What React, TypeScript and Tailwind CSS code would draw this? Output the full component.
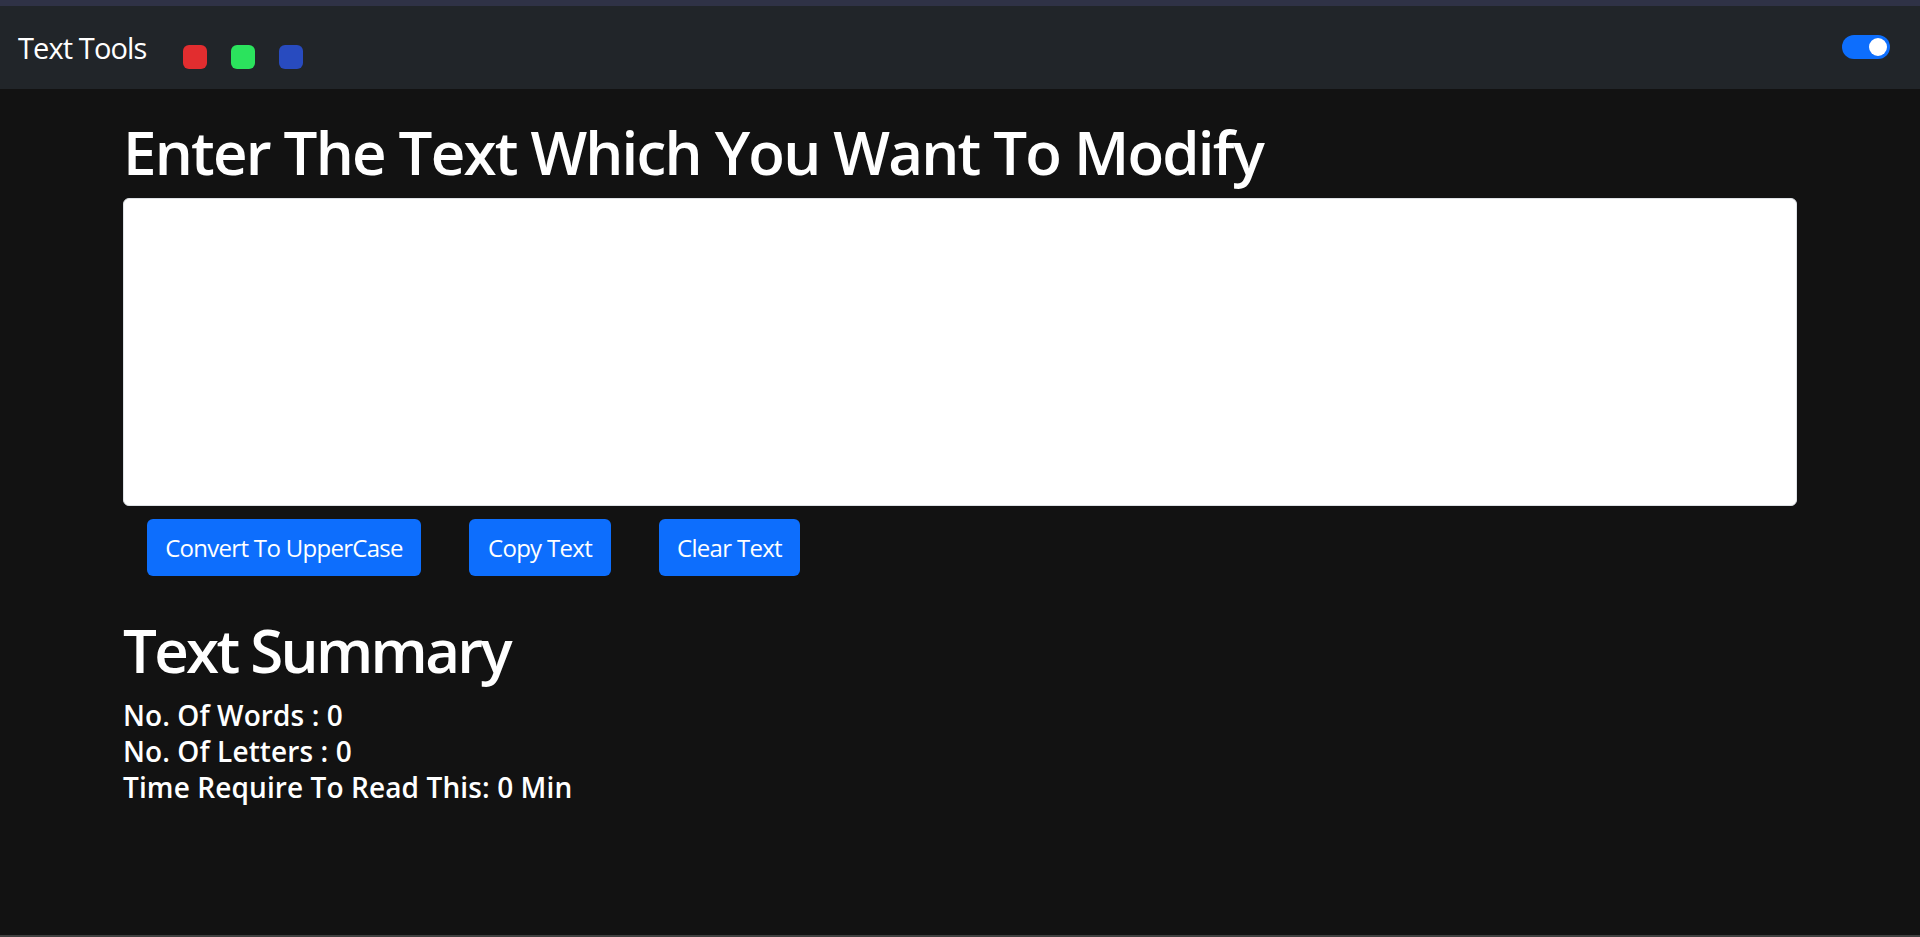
import { useState } from "react";

const swatches = ["bg-[#e22d2f]", "bg-[#2be35d]", "bg-[#284bbf]"];

const Navbar = () => {
  return (
    <nav className="h-[83px] bg-[#212529] flex items-center pl-[18px] pr-[30px]">
      <a className="text-[29px] leading-[40px] text-white tracking-[-0.9px] mt-[1px]">Text Tools</a>
      <div className="flex gap-[24px] ml-[37px] mt-[19px]">
        {swatches.map((c) => (
          <div key={c} className={`w-[24px] h-[24px] rounded-[6px] ${c}`} />
        ))}
      </div>
      <div className="ml-auto -mt-[2px] w-[48px] h-[24px] rounded-full bg-[#0d6efd] flex items-center justify-end pr-[3px]">
        <div className="w-[18px] h-[18px] rounded-full bg-white" />
      </div>
    </nav>
  );
};

export default function App() {
  const [text, setText] = useState("");
  const words = text.split(/\s+/).filter((w) => w.length > 0).length;

  return (
    <div
      className="min-h-screen bg-[#121212] text-white flex flex-col"
      style={{ fontFamily: '"Open Sans", "Noto Sans", sans-serif' }}
    >
      <div className="h-[6px] bg-[#2f3246]" />
      <Navbar />
      <main className="flex-1">
        <div className="w-[1710px] mx-auto px-[18px] pt-[27px]">
          <h1 className="text-[60px] leading-[72px] font-semibold tracking-[-1.8px] mb-[10px]">
            Enter The Text Which You Want To Modify
          </h1>
          <textarea
            value={text}
            onChange={(e) => setText(e.target.value)}
            className="block w-full h-[308px] bg-white text-black border border-[#dee2e6] rounded-[6px] px-[18px] py-[9px] text-[24px] outline-none resize-none"
          />
          <div className="flex mt-[13px]">
            <button className="ml-[24px] w-[274px] h-[57px] rounded-[6px] bg-[#0d6efd] text-white text-[24px] tracking-[-0.7px]">
              Convert To UpperCase
            </button>
            <button className="ml-[48px] w-[142px] h-[57px] rounded-[6px] bg-[#0d6efd] text-white text-[24px] tracking-[-0.7px]">
              Copy Text
            </button>
            <button className="ml-[48px] w-[141px] h-[57px] rounded-[6px] bg-[#0d6efd] text-white text-[24px] tracking-[-0.7px]">
              Clear Text
            </button>
          </div>
        </div>
        <div className="w-[1710px] mx-auto px-[18px] pt-[38px]">
          <h2 className="text-[60px] leading-[72px] font-semibold tracking-[-2.7px] mb-[11px]">
            Text Summary
          </h2>
          <div className="text-[28px] leading-[36px] font-semibold tracking-[0.1px]">
            <p>No. Of Words : {words}</p>
            <p>No. Of Letters : {text.length}</p>
            <p>Time Require To Read This: {Math.round(words * 0.008)} Min</p>
          </div>
        </div>
      </main>
      <div className="h-[2px] bg-[#404040]" />
    </div>
  );
}
